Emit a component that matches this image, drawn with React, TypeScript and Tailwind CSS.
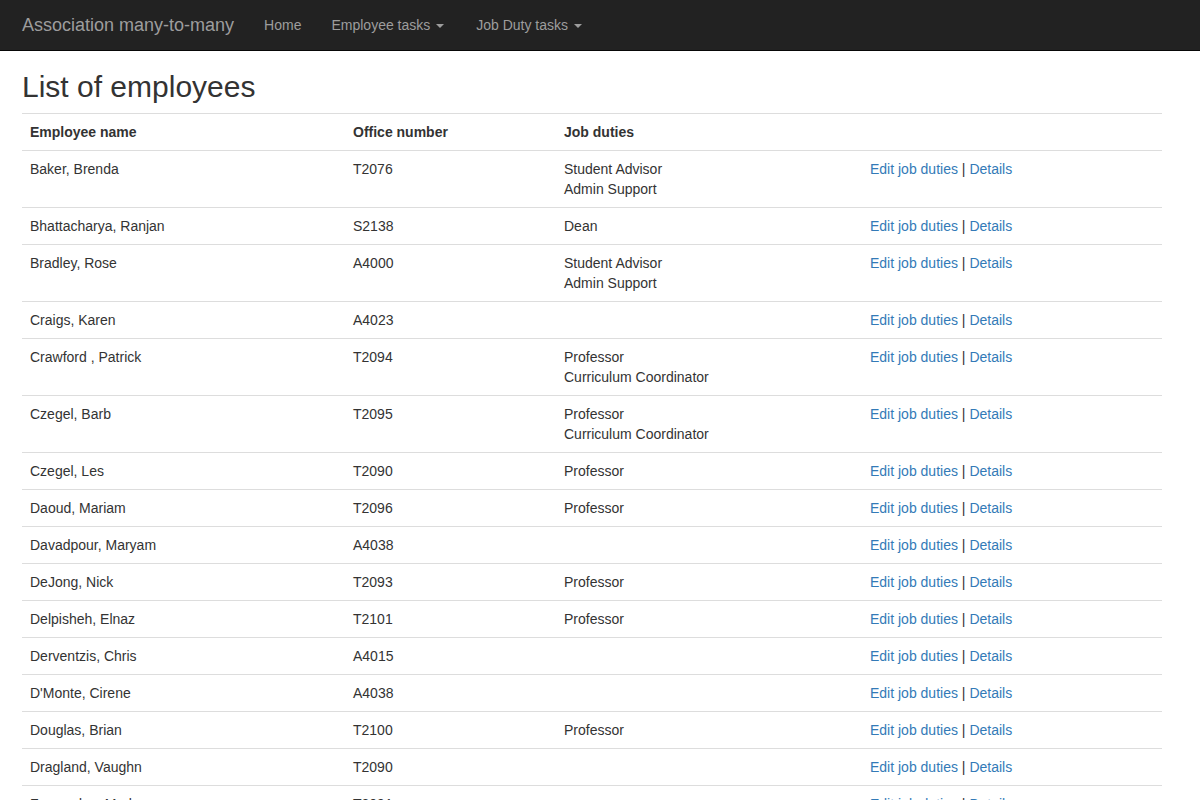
import React from "react";

type Row = { name: string; office: string; duties: string[] };

const rows: Row[] = [
  { name: "Baker, Brenda", office: "T2076", duties: ["Student Advisor", "Admin Support"] },
  { name: "Bhattacharya, Ranjan", office: "S2138", duties: ["Dean"] },
  { name: "Bradley, Rose", office: "A4000", duties: ["Student Advisor", "Admin Support"] },
  { name: "Craigs, Karen", office: "A4023", duties: [] },
  { name: "Crawford , Patrick", office: "T2094", duties: ["Professor", "Curriculum Coordinator"] },
  { name: "Czegel, Barb", office: "T2095", duties: ["Professor", "Curriculum Coordinator"] },
  { name: "Czegel, Les", office: "T2090", duties: ["Professor"] },
  { name: "Daoud, Mariam", office: "T2096", duties: ["Professor"] },
  { name: "Davadpour, Maryam", office: "A4038", duties: [] },
  { name: "DeJong, Nick", office: "T2093", duties: ["Professor"] },
  { name: "Delpisheh, Elnaz", office: "T2101", duties: ["Professor"] },
  { name: "Derventzis, Chris", office: "A4015", duties: [] },
  { name: "D'Monte, Cirene", office: "A4038", duties: [] },
  { name: "Douglas, Brian", office: "T2100", duties: ["Professor"] },
  { name: "Dragland, Vaughn", office: "T2090", duties: [] },
  { name: "Fernandes, Mark", office: "T2091", duties: [] },
];

function Caret() {
  return (
    <span className="inline-block w-0 h-0 ml-[2px] align-middle border-t-[4px] border-t-[#9d9d9d] border-x-[4px] border-x-transparent" />
  );
}

export default function App() {
  return (
    <div
      className="min-h-screen bg-white text-[14px] leading-[20px] text-[#333]"
      style={{ fontFamily: '"Liberation Sans", Arial, sans-serif' }}
    >
      <nav className="h-[51px] bg-[#222] border-b border-[#080808]">
        <div className="flex items-center h-[50px] pl-[7px]">
          <a className="px-[15px] text-[18px] leading-[20px] text-[#9d9d9d] py-[15px]">Association many-to-many</a>
          <a className="px-[15px] py-[15px] text-[#9d9d9d]">Home</a>
          <a className="px-[15px] py-[15px] text-[#9d9d9d]">
            Employee tasks <Caret />
          </a>
          <a className="pl-[17px] pr-[15px] py-[15px] text-[#9d9d9d]">
            Job Duty tasks <Caret />
          </a>
        </div>
      </nav>
      <div className="ml-[22px] w-[1140px]">
        <h2 className="mt-[19px] mb-[10px] text-[30px] leading-[33px] font-normal text-[#333]">List of employees</h2>
        <table className="w-full border-collapse">
          <colgroup>
            <col className="w-[323px]" />
            <col className="w-[211px]" />
            <col className="w-[306px]" />
            <col />
          </colgroup>
          <tbody>
            <tr>
              <th className="border-t border-[#ddd] p-[8px] text-left align-top font-bold">Employee name</th>
              <th className="border-t border-[#ddd] p-[8px] text-left align-top font-bold">Office number</th>
              <th className="border-t border-[#ddd] p-[8px] text-left align-top font-bold">Job duties</th>
              <th className="border-t border-[#ddd] p-[8px]"></th>
            </tr>
            {rows.map((r, i) => (
              <tr key={i}>
                <td className="border-t border-[#ddd] p-[8px] align-top">{r.name}</td>
                <td className="border-t border-[#ddd] p-[8px] align-top">{r.office}</td>
                <td className="border-t border-[#ddd] p-[8px] align-top">
                  {r.duties.map((d, j) => (
                    <div key={j}>{d}</div>
                  ))}
                </td>
                <td className="border-t border-[#ddd] p-[8px] align-top">
                  <a className="text-[#337ab7]">Edit job duties</a> | <a className="text-[#337ab7]">Details</a>
                </td>
              </tr>
            ))}
          </tbody>
        </table>
      </div>
    </div>
  );
}
